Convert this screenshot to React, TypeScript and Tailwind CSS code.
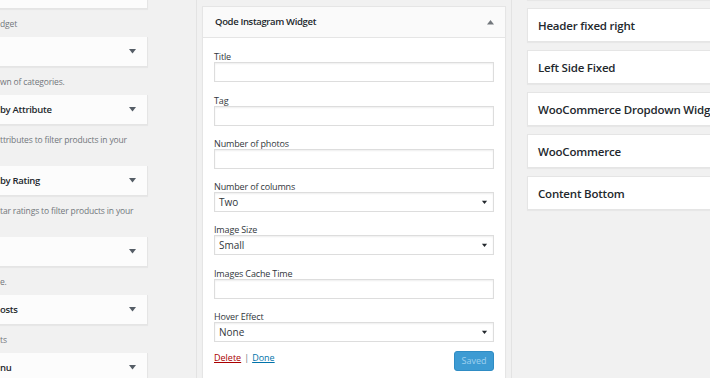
import React from "react";

const leftItems: { title: string; desc: string; lines: number }[] = [
  { title: "", desc: "dget", lines: 1 },
  { title: "", desc: "wn of categories.", lines: 1 },
  { title: "by Attribute", desc: "ttributes to filter products in your", lines: 2 },
  { title: "by Rating", desc: "tar ratings to filter products in your", lines: 2 },
  { title: "", desc: "e.", lines: 1 },
  { title: "osts", desc: "ts", lines: 1 },
  { title: "nu", desc: "", lines: 1 },
];

const rightItems = ["Header fixed right", "Left Side Fixed", "WooCommerce Dropdown Widget", "WooCommerce", "Content Bottom"];

type Field = { label: string; kind: "input" | "select"; value?: string; mb: string };
const fields: Field[] = [
  { label: "Title", kind: "input", mb: "mb-[11px]" },
  { label: "Tag", kind: "input", mb: "mb-[10px]" },
  { label: "Number of photos", kind: "input", mb: "mb-[10px]" },
  { label: "Number of columns", kind: "select", value: "Two", mb: "mb-[10px]" },
  { label: "Image Size", kind: "select", value: "Small", mb: "mb-[11px]" },
  { label: "Images Cache Time", kind: "input", mb: "mb-[10px]" },
  { label: "Hover Effect", kind: "select", value: "None", mb: "mb-[9px]" },
];

function DownArrow({ className }: { className?: string }) {
  return (
    <svg width="7" height="5" viewBox="0 0 7 5" className={className}>
      <path d="M0 0 L7 0 L3.5 4.5 Z" fill="currentColor" />
    </svg>
  );
}

export default function App() {
  return (
    <div className="w-[710px] h-[378px] overflow-hidden bg-[#f1f1f1] flex font-['Open_Sans','Noto_Sans',sans-serif] text-[#23282d]">
      {/* Left column */}
      <div className="w-[197px] shrink-0 border-r border-[#e3e3e3] h-full">
        <div className="w-[148px] mt-[-21px] flex flex-col">
          {leftItems.map((it, i) => (
            <div key={i}>
              <div className="h-[30px] bg-[#fcfcfc] border-r border-b border-[#e5e5e5] shadow-[0_1px_1px_rgba(0,0,0,0.04)] flex items-center justify-between">
                <span className="whitespace-nowrap text-[9.5px] tracking-[-0.3px] font-semibold leading-[14px]">{it.title}</span>
                <DownArrow className="text-[#555d66] mr-[11px]" />
              </div>
              <div className={it.lines === 2 ? "pt-[8px] pb-[5px] h-[41px]" : "pt-[8px] pb-[6px] h-[28px]"}>
                <div className="whitespace-nowrap text-[8.5px] tracking-[-0.15px] leading-[14px] text-[#72777c]">{it.desc}</div>
              </div>
            </div>
          ))}
        </div>
      </div>

      {/* Middle column */}
      <div className="w-[315px] shrink-0 border-r border-[#e3e3e3] h-full pl-[5px] pt-[6px]">
        <div className="w-[304px] bg-white border border-[#e5e5e5] shadow-[0_1px_1px_rgba(0,0,0,0.04)] h-[400px]">
          <div className="h-[31px] bg-[#fafafa] border-b border-[#e5e5e5] flex items-center justify-between pl-[12px] pr-[11px] pt-[1px]">
            <span className="text-[9.5px] tracking-[-0.35px] font-semibold">Qode Instagram Widget</span>
            <svg width="7" height="5" viewBox="0 0 7 5" className="text-[#72777c]">
              <path d="M0 4.5 L7 4.5 L3.5 0 Z" fill="currentColor" />
            </svg>
          </div>
          <div className="px-[11px] pt-[11px]">
            {fields.map((f, i) => (
              <div key={i} className={f.mb}>
                <div className="text-[9px] tracking-[-0.15px] leading-[13px] pt-[1px] h-[13px] text-[#32373c]">{f.label}</div>
                {f.kind === "input" ? (
                  <div className="h-[20px] border border-[#dddddd] bg-white shadow-[inset_0_1px_2px_rgba(0,0,0,0.07)]" />
                ) : (
                  <div className="h-[20px] border border-[#dddddd] bg-white shadow-[inset_0_1px_2px_rgba(0,0,0,0.07)] flex items-center justify-between pl-[4px] pr-[5px]">
                    <span className="text-[10px] text-[#32373c]">{f.value}</span>
                    <DownArrow className="text-[#23282d] scale-[0.8]" />
                  </div>
                )}
              </div>
            ))}
            <div className="flex justify-between items-start">
              <div className="text-[9px] leading-[13px] text-[#72777c] flex">
                <span className="text-[#a00] underline">Delete</span>
                <span className="mx-[3px]">|</span>
                <span className="text-[#0073aa] underline">Done</span>
              </div>
              <div className="h-[20px] w-[40px] rounded-[3px] bg-[#3d9bd3] border border-[#2f8cc4] flex items-center justify-center text-[9px] text-[#9fd1ef]">
                Saved
              </div>
            </div>
          </div>
        </div>
      </div>

      {/* Right column */}
      <div className="flex-1 pl-[15px] h-full overflow-hidden">
        <div className="flex flex-col gap-[8px] mt-[-34px] w-[260px]">
          <div className="h-[34px] bg-white border border-[#e5e5e5] shadow-[0_1px_1px_rgba(0,0,0,0.04)]" />
          {rightItems.map((t) => (
            <div key={t} className="h-[34px] bg-white border-l border-y border-[#e5e5e5] shadow-[0_1px_1px_rgba(0,0,0,0.04)] flex items-center pl-[10px] pt-[2px]">
              <span className="whitespace-nowrap text-[11.5px] tracking-[-0.2px] font-semibold">{t}</span>
            </div>
          ))}
        </div>
      </div>
    </div>
  );
}
